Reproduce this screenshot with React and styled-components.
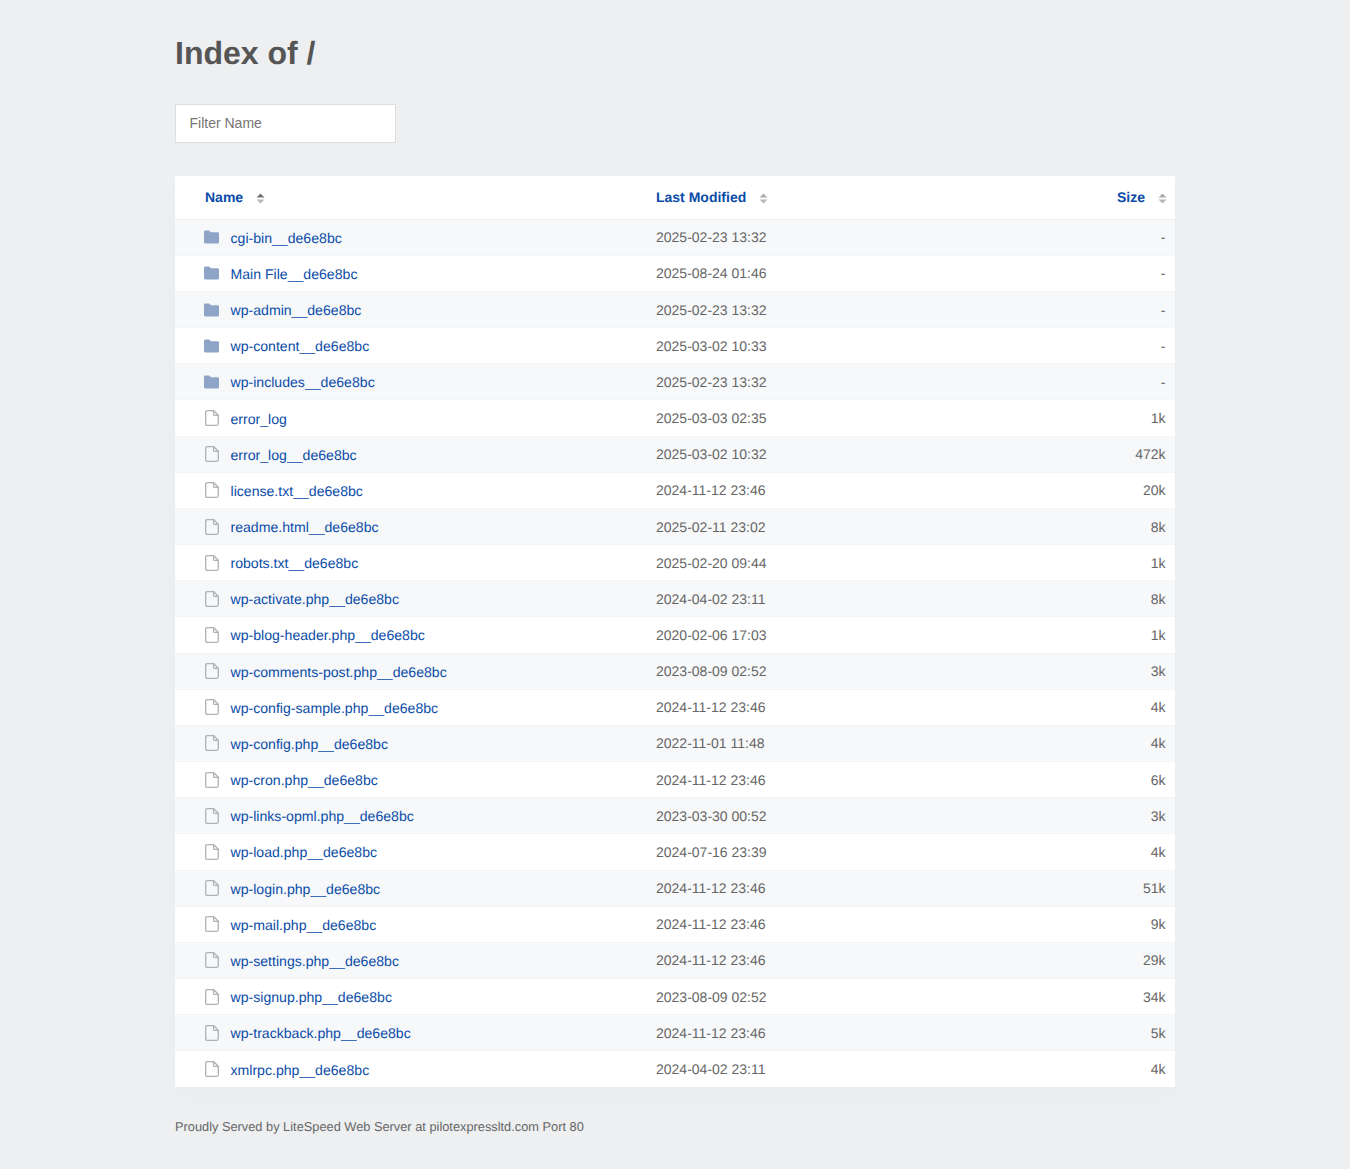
import React from 'react';
import styled, { createGlobalStyle } from 'styled-components';

const FILES = [
  ['cgi-bin__de6e8bc', '2025-02-23 13:32', '-', 'dir'],
  ['Main File__de6e8bc', '2025-08-24 01:46', '-', 'dir'],
  ['wp-admin__de6e8bc', '2025-02-23 13:32', '-', 'dir'],
  ['wp-content__de6e8bc', '2025-03-02 10:33', '-', 'dir'],
  ['wp-includes__de6e8bc', '2025-02-23 13:32', '-', 'dir'],
  ['error_log', '2025-03-03 02:35', '1k'],
  ['error_log__de6e8bc', '2025-03-02 10:32', '472k'],
  ['license.txt__de6e8bc', '2024-11-12 23:46', '20k'],
  ['readme.html__de6e8bc', '2025-02-11 23:02', '8k'],
  ['robots.txt__de6e8bc', '2025-02-20 09:44', '1k'],
  ['wp-activate.php__de6e8bc', '2024-04-02 23:11', '8k'],
  ['wp-blog-header.php__de6e8bc', '2020-02-06 17:03', '1k'],
  ['wp-comments-post.php__de6e8bc', '2023-08-09 02:52', '3k'],
  ['wp-config-sample.php__de6e8bc', '2024-11-12 23:46', '4k'],
  ['wp-config.php__de6e8bc', '2022-11-01 11:48', '4k'],
  ['wp-cron.php__de6e8bc', '2024-11-12 23:46', '6k'],
  ['wp-links-opml.php__de6e8bc', '2023-03-30 00:52', '3k'],
  ['wp-load.php__de6e8bc', '2024-07-16 23:39', '4k'],
  ['wp-login.php__de6e8bc', '2024-11-12 23:46', '51k'],
  ['wp-mail.php__de6e8bc', '2024-11-12 23:46', '9k'],
  ['wp-settings.php__de6e8bc', '2024-11-12 23:46', '29k'],
  ['wp-signup.php__de6e8bc', '2023-08-09 02:52', '34k'],
  ['wp-trackback.php__de6e8bc', '2024-11-12 23:46', '5k'],
  ['xmlrpc.php__de6e8bc', '2024-04-02 23:11', '4k'],
];

const GlobalStyle = createGlobalStyle`
  html, body {
    margin: 0;
    background: #edeff1;
  }
  body {
    font-family: "Liberation Sans", Arial, sans-serif;
    font-size: 14px;
    color: #555;
    text-rendering: geometricPrecision;
  }
`;

const Page = styled.div`
  width: 1000px;
  margin: 0 auto;
  padding: 35px 0 34px;
`;

const Title = styled.h1`
  margin: 0 0 33px;
  font-size: 32px;
  line-height: 36px;
  font-weight: bold;
  color: #555;
`;

const FilterInput = styled.input`
  display: block;
  box-sizing: border-box;
  width: 221px;
  height: 39px;
  padding: 0 14px 2px 13.5px;
  border: 1px solid #dcdee0;
  border-radius: 0;
  background: #fff;
  font: 14px "Liberation Sans", Arial, sans-serif;
  color: #555;
  &::placeholder {
    color: #757575;
    opacity: 1;
  }
`;

const Table = styled.div`
  margin-top: 33px;
  background: #fff;
  box-shadow: 0 10px 20px rgba(0, 0, 0, 0.02);
`;

const Row = styled.div`
  display: grid;
  grid-template-columns: 481px 1fr 100px;
  align-items: center;
  box-sizing: border-box;
  height: 36.17px;
  padding-right: 9.5px;
  background: ${({ $even }) => ($even ? '#fff' : '#f6f8fa')};
  border-bottom: 1px solid #f2f4f6;
  &:last-child {
    border-bottom: 0;
  }
`;

const HeadRow = styled(Row)`
  height: 43.7px;
  padding-right: 8px;
  background: #fff;
  border-bottom: 1px solid #eceef0;
`;

const HeadCell = styled.div`
  display: flex;
  align-items: center;
  justify-content: ${({ $right }) => ($right ? 'flex-end' : 'flex-start')};
  padding-left: ${({ $left }) => $left || 0}px;
`;

const HeadLink = styled.a`
  position: relative;
  top: -0.5px;
  font-weight: bold;
  color: #0b4ca8;
  text-decoration: none;
`;

const SortIcon = styled.svg`
  width: 9px;
  height: 11px;
  margin-left: ${({ $gap }) => $gap}px;
  margin-top: 2px;
`;

const NameCell = styled.div`
  display: flex;
  align-items: center;
  padding-left: 29px;
`;

const IconSlot = styled.span`
  display: flex;
  justify-content: center;
  width: 15px;
  margin-right: 11.5px;
`;

const FileName = styled.a`
  font-size: 14.1px;
  color: #0b4ca8;
  text-decoration: none;
  position: relative;
  top: 0.5px;
`;

const Modified = styled.div`
  color: #666;
`;

const Size = styled.div`
  text-align: right;
  color: #666;
`;

const Footer = styled.div`
  margin-top: 32px;
  font-size: 12.8px;
  line-height: 16px;
  color: #666;
`;

function Sort({ gap, up }) {
  return (
    <SortIcon $gap={gap} viewBox="0 0 9 11">
      <path d="M4.5 0.5 L8.5 4.5 H0.5 Z" fill={up ? '#6d7075' : '#a9adb2'} />
      <path d="M0.5 6.5 H8.5 L4.5 10.5 Z" fill="#b4b8bc" />
    </SortIcon>
  );
}

function FolderIcon() {
  return (
    <svg width="16" height="14" viewBox="0 0 16 14">
      <path d="M0 1.5 Q0 0 1.5 0 H5.5 L7.5 2 H14.5 Q16 2 16 3.5 V12.5 Q16 14 14.5 14 H1.5 Q0 14 0 12.5 Z" fill="#8ea5c8" />
    </svg>
  );
}

function FileIcon() {
  return (
    <svg width="14" height="16" viewBox="0 0 14 16" fill="none" stroke="#aeb1b5" strokeWidth="1.3">
      <path d="M2.2 0.7 H8.8 L13.3 5.2 V13.8 Q13.3 15.3 11.8 15.3 H2.2 Q0.7 15.3 0.7 13.8 V2.2 Q0.7 0.7 2.2 0.7 Z" />
      <path d="M8.6 0.9 V4.4 Q8.6 5.4 9.6 5.4 H13.1" />
    </svg>
  );
}

export default function App() {
  return (
    <>
      <GlobalStyle />
      <Page>
        <Title>Index of /</Title>
        <FilterInput placeholder="Filter Name" />
        <Table>
          <HeadRow $even>
            <HeadCell $left={30}>
              <HeadLink href="#">Name</HeadLink>
              <Sort gap={13} up />
            </HeadCell>
            <HeadCell>
              <HeadLink href="#">Last Modified</HeadLink>
              <Sort gap={13} />
            </HeadCell>
            <HeadCell $right>
              <HeadLink href="#">Size</HeadLink>
              <Sort gap={13} />
            </HeadCell>
          </HeadRow>
          {FILES.map(([name, date, size, type], i) => (
            <Row key={name} $even={i % 2 === 1}>
              <NameCell>
                <IconSlot>{type === 'dir' ? <FolderIcon /> : <FileIcon />}</IconSlot>
                <FileName href="#">{name}</FileName>
              </NameCell>
              <Modified>{date}</Modified>
              <Size>{size}</Size>
            </Row>
          ))}
        </Table>
        <Footer>Proudly Served by LiteSpeed Web Server at pilotexpressltd.com Port 80</Footer>
      </Page>
    </>
  );
}
